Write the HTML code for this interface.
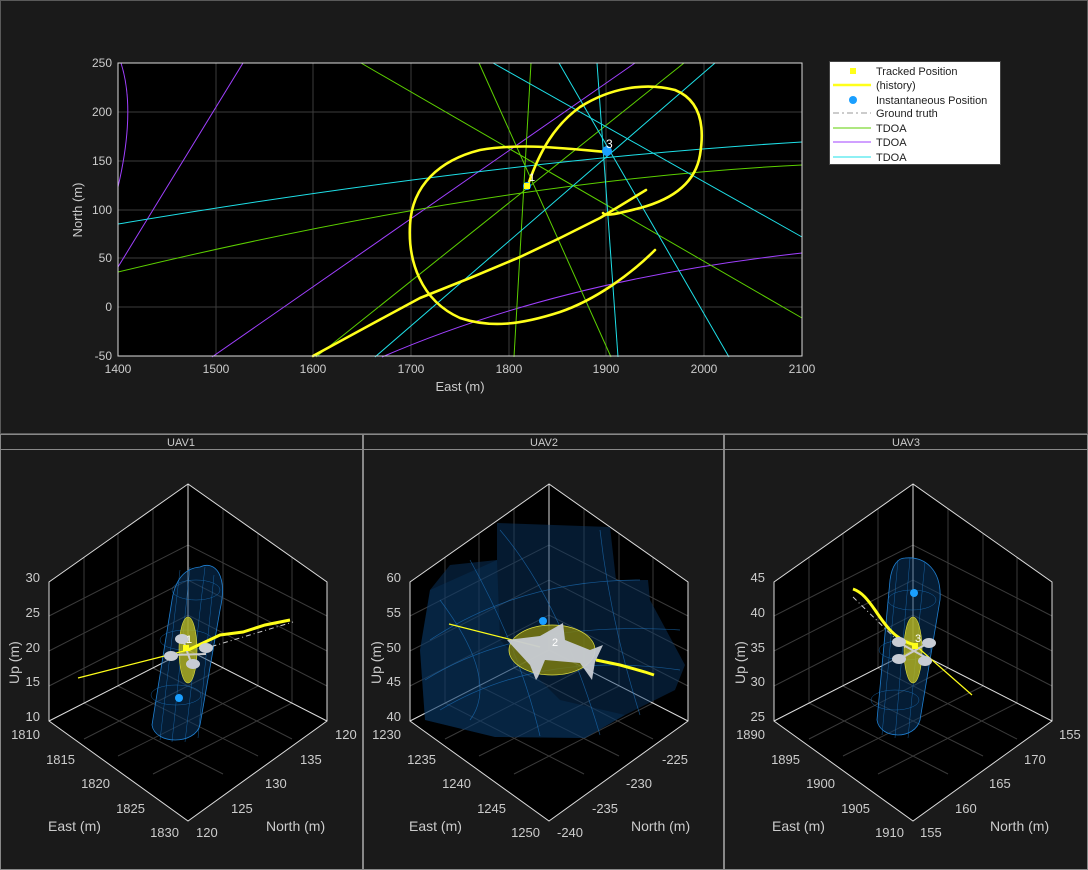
<!DOCTYPE html>
<html><head><meta charset="utf-8"><style>
html,body{margin:0;padding:0;background:#1a1a1a;}
svg{display:block;font-family:"Liberation Sans",sans-serif;}
</style></head><body>
<svg width="1088" height="870" viewBox="0 0 1088 870" xmlns="http://www.w3.org/2000/svg">
<defs>
<g id="hex">
  <g stroke="#3a3a3a" stroke-width="1" fill="none">
    <path d="M-35,668 L-35,509 M-70,686 L-70,533 M-104,703 L-104,557 M35,668 L35,509 M70,686 L70,533 M104,703 L104,557"/>
    <path d="M-139,616 L0,545 L139,616 M-139,651 L0,580 L139,651 M-139,686 L0,615 L139,686"/>
    <path d="M-104,739 L35,668 M-70,756 L70,686 M-35,774 L104,703 M104,739 L-35,668 M70,756 L-70,686 M35,774 L-104,703"/>
  </g>
  <path d="M0,650 L0,484 M0,650 L-139,721 M0,650 L139,721" stroke="#dcdcdc" stroke-width="1" fill="none"/>
  <path d="M0,484 L-139,582 L-139,721 L0,821 L139,721 L139,582 Z" stroke="#dcdcdc" stroke-width="1" fill="none"/>
</g>
</defs>
<rect width="1088" height="870" fill="#1a1a1a"/>
<rect x="0.5" y="0.5" width="1087" height="433" fill="none" stroke="#5a5a5a"/>

<!-- top axes -->
<rect x="118" y="63" width="684" height="293" fill="#000"/>
<g stroke="#3c3c3c" stroke-width="1">
  <path d="M216,63V356 M313,63V356 M411,63V356 M509,63V356 M606,63V356 M704,63V356"/>
  <path d="M118,112H802 M118,161H802 M118,210H802 M118,258H802 M118,307H802"/>
</g>
<g fill="none" stroke-width="1">
  <path d="M121,63 Q136,110 118,187" stroke="#a040ff"/>
  <path d="M243,63 L118,267" stroke="#a040ff"/>
  <path d="M212,357 L635,63" stroke="#a040ff"/>
  <path d="M382,357 Q560,280 802,253" stroke="#a040ff"/>
  <path d="M361,63 L802,318" stroke="#5ccf00"/>
  <path d="M531,63 L514,357" stroke="#5ccf00"/>
  <path d="M684,63 L316,357" stroke="#5ccf00"/>
  <path d="M479,63 L611,357" stroke="#5ccf00"/>
  <path d="M118,272 Q500,180 802,165" stroke="#5ccf00"/>
  <path d="M493,63 L802,237" stroke="#1ee0e8"/>
  <path d="M559,63 L729,357" stroke="#1ee0e8"/>
  <path d="M597,63 L618,357" stroke="#1ee0e8"/>
  <path d="M715,63 L375,357" stroke="#1ee0e8"/>
  <path d="M118,224 Q500,160 802,142" stroke="#1ee0e8"/>
</g>
<g fill="none" stroke="#ffff1a" stroke-width="2.6" stroke-linejoin="round" stroke-linecap="round">
  <path d="M313,356 L370,325 L420,298 L470,278 L520,257 L560,238 L600,218 L646,190"/>
  <path d="M655,250 C630,275 595,300 560,312 C520,325 490,328 460,318 C420,300 408,260 410,225 C412,185 440,160 480,150 C520,143 560,148 607,152"/>
  <path d="M528,185 C540,150 555,125 580,107 C610,88 645,82 675,90 C700,100 705,125 700,155 C695,185 670,200 640,208 C620,213 605,217 603,213"/>
</g>
<g fill="#ccc" font-size="12" text-anchor="end">
  <text x="112" y="67">250</text><text x="112" y="116">200</text><text x="112" y="165">150</text>
  <text x="112" y="214">100</text><text x="112" y="262">50</text><text x="112" y="311">0</text><text x="112" y="360">-50</text>
</g>
<g fill="#ccc" font-size="12" text-anchor="middle">
  <text x="118" y="373">1400</text><text x="216" y="373">1500</text><text x="313" y="373">1600</text><text x="411" y="373">1700</text>
  <text x="509" y="373">1800</text><text x="606" y="373">1900</text><text x="704" y="373">2000</text><text x="802" y="373">2100</text>
  <text x="460" y="391" font-size="13">East (m)</text>
  <text x="0" y="0" font-size="13" transform="translate(82,210) rotate(-90)">North (m)</text>
</g>
<rect x="118" y="63" width="684" height="293" fill="none" stroke="#dcdcdc"/>
<circle cx="527" cy="186" r="4" fill="#1a9fff"/><rect x="524" y="183" width="6" height="6" fill="#ffff1a"/>
<text x="529" y="181" fill="#fff" font-size="11">1</text>
<circle cx="607" cy="151" r="5" fill="#1a9fff"/>
<text x="606" y="148" fill="#fff" font-size="12">3</text>

<!-- legend -->
<rect x="829.5" y="61.5" width="171" height="103" fill="#fff" stroke="#444"/>
<g font-size="11" fill="#222">
  <text x="876" y="75">Tracked Position</text>
  <text x="876" y="89">(history)</text>
  <text x="876" y="104">Instantaneous Position</text>
  <text x="876" y="117">Ground truth</text>
  <text x="876" y="132">TDOA</text>
  <text x="876" y="146">TDOA</text>
  <text x="876" y="161">TDOA</text>
</g>
<rect x="850" y="68" width="6" height="6" fill="#ffff1a"/>
<path d="M833,85H871" stroke="#ffff1a" stroke-width="2.5"/>
<circle cx="853" cy="100" r="4" fill="#1a9fff"/>
<path d="M833,113H871" stroke="#bbb" stroke-width="1.5" stroke-dasharray="6,3,2,3"/>
<path d="M833,128H871" stroke="#5ccf00"/>
<path d="M833,142H871" stroke="#a040ff"/>
<path d="M833,157H871" stroke="#1ee0e8"/>

<!-- bottom panels -->
<g stroke="#888" fill="none">
  <rect x="0.5" y="434.5" width="362" height="435"/>
  <rect x="363.5" y="434.5" width="360" height="435"/>
  <rect x="724.5" y="434.5" width="363" height="435"/>
  <path d="M1,449.5H362 M364,449.5H723 M725,449.5H1087"/>
</g>
<g fill="#ccc" font-size="11" text-anchor="middle">
  <text x="181" y="446">UAV1</text><text x="544" y="446">UAV2</text><text x="906" y="446">UAV3</text>
</g>

<!-- panel 1 -->
<path d="M188,484 L49,582 L49,721 L188,821 L327,721 L327,582 Z" fill="#000"/>
<use href="#hex" transform="translate(188,0)"/>
<g>
  <path d="M200,567 C215,560 228,575 220,610 L200,725 C195,745 155,745 152,725 L172,600 C176,575 188,568 200,567 Z" fill="#0a3a6a" fill-opacity="0.5" stroke="#1f7fd0" stroke-width="0.8"/>
  <g stroke="#1f7fd0" stroke-width="0.5" fill="none" opacity="0.7">
    <path d="M180,570 L160,740 M190,567 L172,742 M205,567 L185,742 M214,575 L198,738"/>
    <ellipse cx="196" cy="590" rx="24" ry="10"/><ellipse cx="186" cy="640" rx="26" ry="10"/><ellipse cx="176" cy="695" rx="25" ry="10"/>
  </g>
  <ellipse cx="188" cy="650" rx="9" ry="33" fill="#b8b820" fill-opacity="0.8" stroke="#e0e040" stroke-width="0.6"/>
  <path d="M78,678 L188,650" stroke="#ffff1a" stroke-width="1.2"/>
  <path d="M188,650 L220,635 L243,632 L265,625 L290,620" stroke="#ffff1a" stroke-width="3" fill="none"/>
  <path d="M200,650 L293,622" stroke="#ccc" stroke-width="1" stroke-dasharray="5,3,1,3"/>
  <path d="M170,655 L206,654 M183,640 L193,668" stroke="#ccc" stroke-width="2"/>
  <ellipse cx="171" cy="656" rx="7" ry="5" fill="#c8ccd4"/><ellipse cx="206" cy="648" rx="7" ry="5" fill="#c8ccd4"/>
  <ellipse cx="193" cy="664" rx="7" ry="5" fill="#c8ccd4"/><ellipse cx="182" cy="639" rx="7" ry="5" fill="#c8ccd4"/>
  <rect x="183" y="645" width="6" height="6" fill="#ffff1a"/>
  <text x="186" y="643" fill="#fff" font-size="11">1</text>
  <circle cx="179" cy="698" r="4" fill="#1a9fff"/>
</g>
<g fill="#ccc" font-size="13">
  <g text-anchor="end">
    <text x="40" y="582">30</text><text x="40" y="617">25</text><text x="40" y="652">20</text><text x="40" y="686">15</text><text x="40" y="721">10</text>
    <text x="40" y="739">1810</text><text x="75" y="764">1815</text><text x="110" y="788">1820</text><text x="145" y="813">1825</text><text x="179" y="837">1830</text>
  </g>
  <text x="335" y="739">120</text><text x="300" y="764">135</text><text x="265" y="788">130</text><text x="231" y="813">125</text><text x="196" y="837">120</text>
  <text x="48" y="831" font-size="14">East (m)</text><text x="266" y="831" font-size="14">North (m)</text>
  <text x="0" y="0" font-size="14" transform="translate(19,684) rotate(-90)">Up (m)</text>
</g>

<!-- panel 2 -->
<path d="M549,484 L410,582 L410,721 L549,821 L688,721 L688,582 Z" fill="#000"/>
<use href="#hex" transform="translate(549,0)"/>
<g>
  <path d="M497,523 L610,527 L616,580 L648,580 L650,600 L685,665 L675,690 L625,715 L585,738 L495,737 L425,720 L420,650 L430,590 L450,565 L497,560 Z" fill="#0a3a6a" fill-opacity="0.45" stroke="none"/>
  <path d="M430,590 L497,560 L500,640 L560,700 L625,715 L585,738 L495,737 L425,720 L420,650 Z" fill="#0a3a6a" fill-opacity="0.3"/>
  <g stroke="#1f7fd0" stroke-width="0.7" fill="none" opacity="0.6">
    <path d="M430,640 Q520,580 640,580 M425,680 Q520,620 680,630 M440,710 Q540,650 680,670 M500,530 Q560,600 600,735 M470,560 Q520,650 540,736 M600,530 Q610,620 640,715 M440,600 Q500,680 470,720"/>
  </g>
  <ellipse cx="552" cy="650" rx="43" ry="25" fill="#7a7a10" fill-opacity="0.85" stroke="#e0e040" stroke-width="0.8"/>
  <path d="M449,624 L540,647" stroke="#ffff1a" stroke-width="1.2"/>
  <path d="M596,660 L620,665 L645,672 L654,675" stroke="#ffff1a" stroke-width="3" fill="none"/>
  <path d="M507,640 L540,636 L563,623 L565,640 L590,650 L603,645 L595,662 L592,680 L580,663 L545,660 L538,677 L536,680 L530,665 Z" fill="#c8ccd4" fill-opacity="0.95"/>
  <text x="552" y="646" fill="#fff" font-size="11">2</text>
  <circle cx="543" cy="621" r="4" fill="#1a9fff"/>
</g>
<g fill="#ccc" font-size="13">
  <g text-anchor="end">
    <text x="401" y="582">60</text><text x="401" y="617">55</text><text x="401" y="652">50</text><text x="401" y="686">45</text><text x="401" y="721">40</text>
    <text x="401" y="739">1230</text><text x="436" y="764">1235</text><text x="471" y="788">1240</text><text x="506" y="813">1245</text><text x="540" y="837">1250</text>
  </g>
  <text x="662" y="764">-225</text><text x="626" y="788">-230</text><text x="592" y="813">-235</text><text x="557" y="837">-240</text>
  <text x="409" y="831" font-size="14">East (m)</text><text x="631" y="831" font-size="14">North (m)</text>
  <text x="0" y="0" font-size="14" transform="translate(381,684) rotate(-90)">Up (m)</text>
</g>

<!-- panel 3 -->
<path d="M913,484 L774,582 L774,721 L913,821 L1052,721 L1052,582 Z" fill="#000"/>
<use href="#hex" transform="translate(913,0)"/>
<g>
  <path d="M905,558 C925,556 942,570 940,600 L920,720 C915,740 880,740 877,720 L890,580 C892,565 898,558 905,558 Z" fill="#0a3a6a" fill-opacity="0.5" stroke="#1f7fd0" stroke-width="0.8"/>
  <g stroke="#1f7fd0" stroke-width="0.5" fill="none" opacity="0.7">
    <path d="M898,560 L882,735 M910,558 L895,738 M925,562 L908,738"/>
    <ellipse cx="912" cy="600" rx="24" ry="10"/><ellipse cx="905" cy="650" rx="26" ry="10"/><ellipse cx="895" cy="700" rx="24" ry="10"/>
  </g>
  <ellipse cx="913" cy="650" rx="9" ry="33" fill="#b8b820" fill-opacity="0.8" stroke="#e0e040" stroke-width="0.6"/>
  <path d="M853,589 C862,592 868,600 875,610 C885,625 895,640 915,645" stroke="#ffff1a" stroke-width="3" fill="none"/>
  <path d="M915,645 L972,695" stroke="#ffff1a" stroke-width="1.2"/>
  <path d="M853,597 L905,648" stroke="#ccc" stroke-width="1" stroke-dasharray="5,3,1,3"/>
  <path d="M898,642 L930,660 M930,642 L898,660" stroke="#ccc" stroke-width="2"/>
  <ellipse cx="899" cy="642" rx="7" ry="5" fill="#c8ccd4"/><ellipse cx="929" cy="643" rx="7" ry="5" fill="#c8ccd4"/>
  <ellipse cx="899" cy="659" rx="7" ry="5" fill="#c8ccd4"/><ellipse cx="925" cy="661" rx="7" ry="5" fill="#c8ccd4"/>
  <rect x="912" y="643" width="6" height="6" fill="#ffff1a"/>
  <text x="915" y="642" fill="#fff" font-size="11">3</text>
  <circle cx="914" cy="593" r="4" fill="#1a9fff"/>
</g>
<g fill="#ccc" font-size="13">
  <g text-anchor="end">
    <text x="765" y="582">45</text><text x="765" y="617">40</text><text x="765" y="652">35</text><text x="765" y="686">30</text><text x="765" y="721">25</text>
    <text x="765" y="739">1890</text><text x="800" y="764">1895</text><text x="835" y="788">1900</text><text x="870" y="813">1905</text><text x="904" y="837">1910</text>
  </g>
  <text x="1059" y="739">155</text><text x="1024" y="764">170</text><text x="989" y="788">165</text><text x="955" y="813">160</text><text x="920" y="837">155</text>
  <text x="772" y="831" font-size="14">East (m)</text><text x="990" y="831" font-size="14">North (m)</text>
  <text x="0" y="0" font-size="14" transform="translate(745,684) rotate(-90)">Up (m)</text>
</g>
</svg>
</body></html>
